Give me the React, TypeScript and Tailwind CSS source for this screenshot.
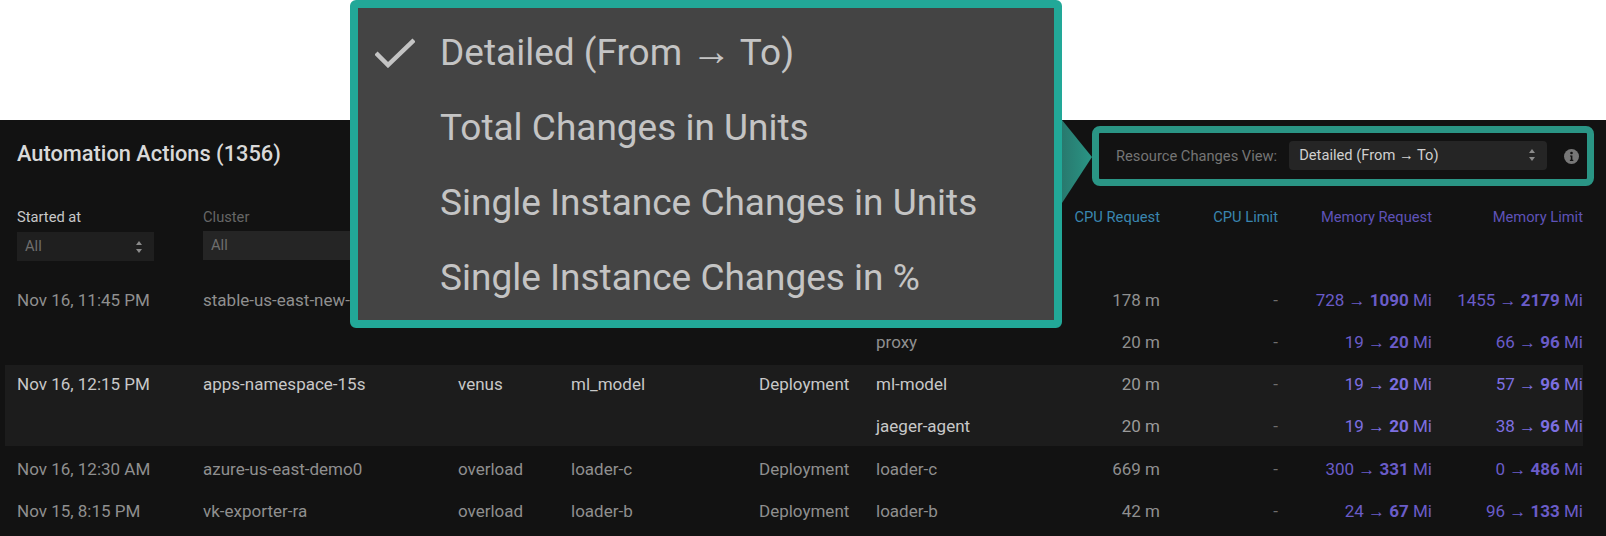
import React from 'react';

const font = { fontFamily: 'Roboto, "Noto Sans", sans-serif' };

interface Row {
  started?: string;
  cluster?: string;
  namespace?: string;
  name?: string;
  kind?: string;
  container: string;
  cpu: string;
  mem: [string, string];
  limit: [string, string];
}

const plainRows: Row[] = [
  {
    started: 'Nov 16, 11:45 PM',
    cluster: 'stable-us-east-new-eks',
    container: '',
    cpu: '178 m',
    mem: ['728', '1090'],
    limit: ['1455', '2179'],
  },
  { container: 'proxy', cpu: '20 m', mem: ['19', '20'], limit: ['66', '96'] },
];

const activeRows: Row[] = [
  {
    started: 'Nov 16, 12:15 PM',
    cluster: 'apps-namespace-15s',
    namespace: 'venus',
    name: 'ml_model',
    kind: 'Deployment',
    container: 'ml-model',
    cpu: '20 m',
    mem: ['19', '20'],
    limit: ['57', '96'],
  },
  { container: 'jaeger-agent', cpu: '20 m', mem: ['19', '20'], limit: ['38', '96'] },
];

const lastRows: Row[] = [
  {
    started: 'Nov 16, 12:30 AM',
    cluster: 'azure-us-east-demo0',
    namespace: 'overload',
    name: 'loader-c',
    kind: 'Deployment',
    container: 'loader-c',
    cpu: '669 m',
    mem: ['300', '331'],
    limit: ['0', '486'],
  },
  {
    started: 'Nov 15, 8:15 PM',
    cluster: 'vk-exporter-ra',
    namespace: 'overload',
    name: 'loader-b',
    kind: 'Deployment',
    container: 'loader-b',
    cpu: '42 m',
    mem: ['24', '67'],
    limit: ['96', '133'],
  },
];

const gridCols = 'grid grid-cols-[186px_255px_113px_188px_117px_144px_140px_118px_154px_151px]';

const Stepper: React.FC = () => (
  <svg width="8" height="14" viewBox="0 0 8 14" fill="#8a8a8a">
    <path d="M4 1 7 5H1z" />
    <path d="M4 13 1 9h6z" />
  </svg>
);

const Arrow: React.FC = () => <span className="font-['Liberation_Sans'] font-bold">→</span>;

const Change: React.FC<{ value: [string, string]; active?: boolean }> = ({ value, active }) => (
  <div className={`whitespace-nowrap text-right ${active ? 'text-[#7d6fe0]' : 'text-[#6a5cc8]'}`}>
    {value[0]} <Arrow /> <span className="font-bold">{value[1]}</span> Mi
  </div>
);

const TableRow: React.FC<{ row: Row; active?: boolean; height?: string }> = ({
  row,
  active,
  height = 'h-[42px]',
}) => (
  <div
    className={`${gridCols} items-center pl-3 text-[17px] ${height} ${
      active ? 'text-[#c8c8c8]' : 'text-[#8f8f8f]'
    }`}
  >
    <div>{row.started}</div>
    <div className="whitespace-nowrap">{row.cluster}</div>
    <div>{row.namespace}</div>
    <div>{row.name}</div>
    <div>{row.kind}</div>
    <div>{row.container}</div>
    <div className={`text-right ${active ? 'text-[#9a9a9a]' : ''}`}>{row.cpu}</div>
    <div className="text-right text-[#6e6e6e]">-</div>
    <Change value={row.mem} active={active} />
    <Change value={row.limit} active={active} />
  </div>
);

export default function App() {
  return (
    <div className="relative h-[536px] w-[1606px] overflow-hidden bg-white" style={font}>
      <div className="h-[120px]" />

      <div className="h-[416px] bg-[#121212] pl-[5px]">
        {/* Title + view selector */}
        <div className="flex h-[66px] items-center justify-between pl-3 pr-3">
          <h2 className="pt-[3px] text-[21.8px] font-medium text-[#d9d9d9]">Automation Actions (1356)</h2>
          <div className="mt-[6px] flex h-[60px] w-[502px] items-center rounded-[8px] border-[7px] border-[#2a9585] pl-[17px]">
            <span className="text-[14.7px] text-[#757575]">Resource Changes View:</span>
            <div className="mb-[2px] ml-[12px] flex h-[29px] w-[258px] items-center justify-between rounded bg-[#252525] pl-[10px] pr-[11px] text-[14.7px] text-[#d0d0d0]">
              <span>
                Detailed (From <Arrow /> To)
              </span>
              <Stepper />
            </div>
            <svg className="ml-[17px]" width="15" height="15" viewBox="0 0 15 15">
              <circle cx="7.5" cy="7.5" r="7.5" fill="#777777" />
              <circle cx="7.5" cy="4" r="1.3" fill="#121212" />
              <path d="M6 6.4h2.4v4.4h.9v1.1H5.9v-1.1h.9V7.5H6z" fill="#121212" />
            </svg>
          </div>
        </div>

        {/* Filters and column heads */}
        <div className={`${gridCols} h-[94px] pl-3 pt-[21px] text-[14.7px]`}>
          <div>
            <div className="leading-[20px] text-[#c8c8c8]">Started at</div>
            <div className="mt-[5px] flex h-[29px] w-[137px] items-center justify-between bg-[#1f1f1f] pl-2 pr-[11px] text-[#6e6e6e]">
              All
              <Stepper />
            </div>
          </div>
          <div>
            <div className="leading-[20px] text-[#666666]">Cluster</div>
            <div className="mt-[4px] flex h-[29px] w-[200px] items-center bg-[#252525] pl-2 text-[#6e6e6e]">All</div>
          </div>
          <div />
          <div />
          <div />
          <div />
          <div className="text-right leading-[20px] text-[#3a86b0]">CPU Request</div>
          <div className="text-right leading-[20px] text-[#3a86b0]">CPU Limit</div>
          <div className="text-right leading-[20px] text-[#5f52b8]">Memory Request</div>
          <div className="text-right leading-[20px] text-[#5f52b8]">Memory Limit</div>
        </div>

        {/* Rows */}
        <div>
          {plainRows.map((row, i) => (
            <TableRow key={i} row={row} />
          ))}
        </div>
        <div className="mt-[1px] w-[1578px] bg-[#1c1c1c]">
          <TableRow row={activeRows[0]} active height="h-[42px] pb-[2px]" />
          <TableRow row={activeRows[1]} active height="h-[39px]" />
        </div>
        <div className="mt-[3px]">
          {lastRows.map((row, i) => (
            <TableRow key={i} row={row} />
          ))}
        </div>
      </div>

      {/* Callout arrow between the menu and the selector */}
      <svg className="absolute left-[1062px] top-[120px]" width="31" height="83" viewBox="0 0 31 83">
        <defs>
          <linearGradient id="callout" x1="0" y1="0" x2="1" y2="0">
            <stop offset="0" stopColor="#28796e" />
            <stop offset="1" stopColor="#2a9585" />
          </linearGradient>
        </defs>
        <path d="M0 0 30 37 0 83z" fill="url(#callout)" />
      </svg>

      {/* Enlarged dropdown menu */}
      <div className="absolute left-[350px] top-0 h-[328px] w-[712px] rounded-[6px] border-[8px] border-[#22a898] bg-[#444444] pt-[7px] text-[37px] text-[#c4c4c4]">
        {[
          ['Detailed (From ', ' To)'],
          ['Total Changes in Units'],
          ['Single Instance Changes in Units'],
          ['Single Instance Changes in %'],
        ].map((parts, i) => (
          <div key={i} className="flex h-[75px] items-center gap-[25px] pl-[17px]">
            <div className="w-[40px]">
              {i === 0 && (
                <svg width="40" height="30" viewBox="0 0 40 30" fill="none" stroke="#c4c4c4" strokeWidth="4.5">
                  <path d="M1 15 13 27 39 2" />
                </svg>
              )}
            </div>
            <span className="whitespace-pre">
              {parts[0]}
              {parts[1] && (
                <span className="text-[40px] leading-none">
                  <Arrow />
                </span>
              )}
              {parts[1]}
            </span>
          </div>
        ))}
      </div>
    </div>
  );
}
